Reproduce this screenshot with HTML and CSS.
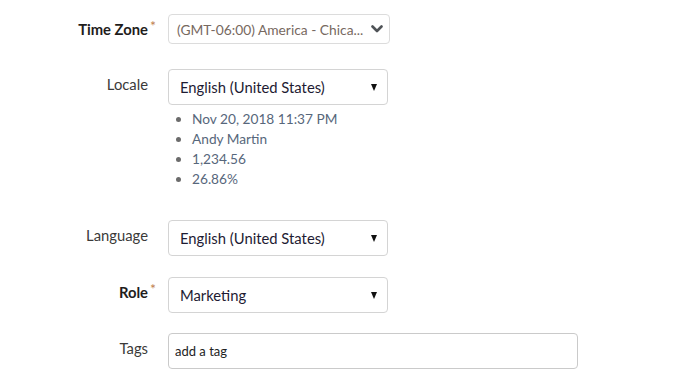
FILE: index.html
```html
<!DOCTYPE html>
<html lang="en">
<head>
<meta charset="utf-8">
<title>User Settings</title>
<link rel="stylesheet" href="styles.css">
</head>
<body>
<form class="settings">
  <div class="row row-tz">
    <label class="lbl req">Time Zone</label>
    <div class="pick pick-tz">
      <span class="val">(GMT-06:00) America - Chica...</span>
      <svg class="chev" width="12" height="8" viewBox="0 0 12 8"><polyline points="1.5,1.5 6,6 10.5,1.5" fill="none" stroke="#4f5357" stroke-width="2.6" stroke-linecap="round" stroke-linejoin="round"/></svg>
    </div>
  </div>

  <div class="row row-locale">
    <label class="lbl">Locale</label>
    <div>
      <div class="pick">
        <span class="val">English (United States)</span>
        <span class="tri"></span>
      </div>
      <ul class="samples">
        <li>Nov 20, 2018 11:37 PM</li>
        <li>Andy Martin</li>
        <li>1,234.56</li>
        <li>26.86%</li>
      </ul>
    </div>
  </div>

  <div class="row row-lang">
    <label class="lbl">Language</label>
    <div class="pick">
      <span class="val">English (United States)</span>
      <span class="tri"></span>
    </div>
  </div>

  <div class="row row-role">
    <label class="lbl req">Role</label>
    <div class="pick">
      <span class="val">Marketing</span>
      <span class="tri"></span>
    </div>
  </div>

  <div class="row row-tags">
    <label class="lbl">Tags</label>
    <input class="tags" type="text" placeholder="add a tag">
  </div>
</form>
</body>
</html>
```

FILE: styles.css
```css
*,*::before,*::after {box-sizing: border-box;}
body {
  margin: 0;
  font-family: Lato, "Open Sans", sans-serif;
  font-size: 14.8px;
  color: #222;
  background: #fff;
}
.settings {
  padding-top: 14px;
}
.row {
  display: grid;
  grid-template-columns: 148px 1fr;
  column-gap: 20px;
  align-items: start;
}
.row-locale {margin-top: 25px;}
.row-lang {margin-top: 31px;}
.row-role {margin-top: 21px;}
.row-tags {margin-top: 20px;}

.lbl {
  position: relative;
  text-align: right;
  line-height: 20px;
  padding-top: 5px;
  color: #3b3a39;
}
.req {
  font-weight: bold;
  color: #1f1d1c;
}
.req::after {
  content: "*";
  position: absolute;
  right: -8px;
  top: 2px;
  font-size: 14px;
  font-weight: normal;
  color: #c0814f;
}

.pick {
  display: flex;
  align-items: center;
  justify-content: space-between;
  width: 220px;
  height: 36px;
  padding: 0 10px 0 11px;
  border: 1px solid #d4d4d4;
  border-radius: 4px;
  background: #fff;
}
.pick .val {
  color: #1e1b33;
  white-space: nowrap;
}
.pick-tz {
  width: 222px;
  height: 30px;
  padding: 0 6px 0 8px;
  border-color: #dcdcdc;
}
.pick-tz .val {
  color: #77695f;
  font-size: 13.8px;
}
.tri {
  width: 0;
  height: 0;
  border-left: 3.5px solid transparent;
  border-right: 3.5px solid transparent;
  border-top: 7px solid #111;
}

.samples {
  margin: 4px 0 0;
  padding-left: 24px;
  font-size: 13.7px;
  line-height: 20px;
  color: #57677b;
}
.samples li::marker {color: #6b6b6b;}

.tags {
  width: 410px;
  height: 36px;
  padding: 0 6px;
  border: 1px solid #cacaca;
  border-radius: 4px;
  font-family: Lato, "Open Sans", sans-serif;
  font-size: 13px;
  outline: none;
}
.tags::placeholder {color: #222; opacity: 1;}
```
